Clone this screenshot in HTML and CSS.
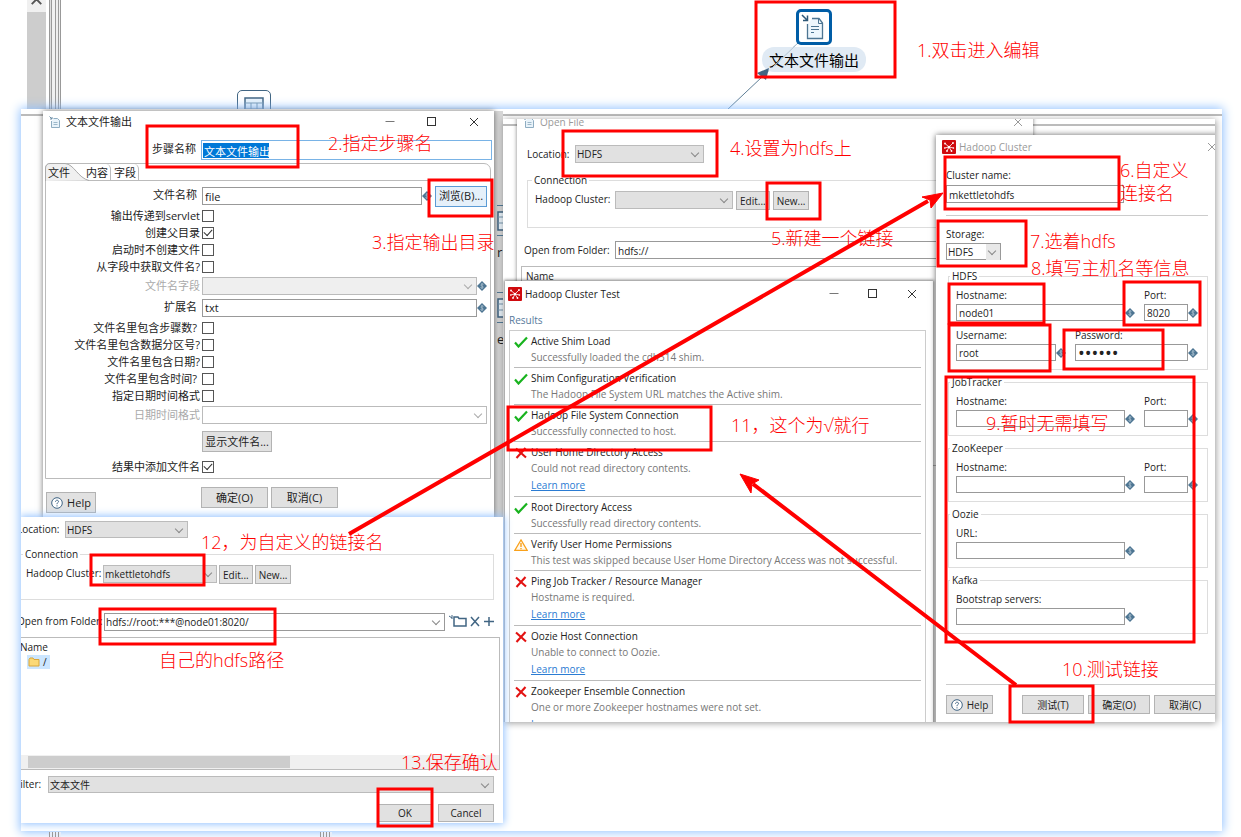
FILE: index.html
```html
<!DOCTYPE html>
<html lang="zh-CN">
<head>
<meta charset="utf-8">
<title>文本文件输出</title>
<link rel="stylesheet" href="styles.css">
</head>
<body>
<svg class="defs" aria-hidden="true">
  <symbol id="var" viewBox="0 0 10 10"><path d="M5 0 10 5 5 10 0 5Z" fill="#4d7592"/><path d="M6.500 3.300C5 2.600 3.600 3.200 4 4.300S6.400 5 6.200 6.200 4.300 7.200 3.400 6.500M5 2v6" fill="none" stroke="#b5c8d6" stroke-width=".7"/></symbol>
  <symbol id="doc" viewBox="0 0 12 12"><path d="M4.500 2.500H8.500L10.500 4.500V11.500H2.500V5" fill="#e9f3fa" stroke="#8fadc2"/><path d="M4.500 6.500H8.500M4.500 8.500H8.500" stroke="#9db8ca"/><path d="M.5.5 3 3M3 1V3H1" fill="none" stroke="#6d8ea7"/></symbol>
  <symbol id="hadoop" viewBox="0 0 14 14"><rect width="14" height="14" rx="1" fill="#cf0a0e"/><path d="M7 7 3 3.500M7 7 11 3M7 7 2.500 8M7 7 11.500 8M7 7 5 11M7 7 9.500 11" stroke="#fff" stroke-width=".8"/><circle cx="7" cy="7" r="1.300" fill="#fff"/><g fill="#fff"><circle cx="3" cy="3.500" r=".9"/><circle cx="11" cy="3" r=".9"/><circle cx="2.800" cy="8" r=".8"/><circle cx="11.400" cy="8" r=".8"/><circle cx="5" cy="11" r=".9"/><circle cx="9.500" cy="11" r=".9"/></g></symbol>
  <symbol id="ok" viewBox="0 0 14 12"><path d="M1 6.500 4.500 10.500 13 1.500" fill="none" stroke="#18b31e" stroke-width="2.200"/></symbol>
  <symbol id="bad" viewBox="0 0 14 12"><path d="M2 1.500 12 10.500M11.500 1 2.500 11" fill="none" stroke="#e31212" stroke-width="2.100"/></symbol>
  <symbol id="warn" viewBox="0 0 14 12"><path d="M7 .9 13.200 11.400H.8Z" fill="#fff8ec" stroke="#f9a11b" stroke-width="1.200"/><path d="M7 4V8M7 9.100V10.300" stroke="#f9a11b" stroke-width="1.400"/></symbol>
  <symbol id="help" viewBox="0 0 12 12"><circle cx="6" cy="6" r="5.300" fill="#fff" stroke="#3f6484"/><path d="M4.500 4.700C4.600 2.700 7.700 2.800 7.500 4.700 7.300 5.700 6 5.700 6 7.200M6 8.300V9.400" fill="none" stroke="#3f6484"/></symbol>
  <symbol id="min" viewBox="0 0 10 10"><path d="M.5 4.500H9.500" stroke="#777"/></symbol>
  <symbol id="max" viewBox="0 0 10 10"><rect x=".5" y=".5" width="8" height="8" fill="none" stroke="#333"/></symbol>
  <symbol id="close" viewBox="0 0 10 10"><path d="M1 1 9 9M9 1 1 9" stroke="currentColor" fill="none"/></symbol>
  <symbol id="grid" viewBox="0 0 20 20"><rect x="1" y="1" width="18" height="18" fill="#e9f3fa" stroke="#416583" stroke-width="1.500"/><path d="M1 6H19M7 6V19M13 6V19M1 12H19" stroke="#7796ad"/></symbol>
</svg>

<main class="stage">
  <div class="side-scroll"><svg viewBox="0 0 20 12"><path d="M5 4 10 -1 15 4" fill="none" stroke="#555" stroke-width="2"/></svg></div>
  <div class="splitter"></div>
  <div class="tile"><svg width="20" height="20"><use href="#grid"/></svg></div>

  <svg class="hop" viewBox="0 0 80 70"><path d="M0 68 71 1" stroke="#5f7f97" fill="none"/></svg>
  <div class="step">
    <div class="step-icon"><svg width="28" height="28" viewBox="0 0 28 28"><path d="M7.500 11V25.500H22.500V10L19 5.500H12" fill="#eef7fd" stroke="#4d7592" stroke-width="1.300"/><path d="M18.500 6V10.500H22.500M11 13.500H19M11 16.500H19M11 19.500H14" stroke="#4d7592" fill="none"/><path d="M2 2 7 7M7.500 2.500V7.500H3" stroke="#2d5878" stroke-width="1.500" fill="none"/></svg></div>
    <div class="step-name">文本文件输出</div>
  </div>
  <svg class="hop" viewBox="0 0 80 70"><path d="M30 31 42 26 39 38Z" fill="#416583"/><path d="M45 26 70 2" stroke="#b3c5d3"/></svg>

  <section class="sheet">
    <div class="sheet-rule"></div>
    <div class="peek"><div><svg width="20" height="20"><use href="#grid"/></svg></div><span>r</span><div><svg width="20" height="20"><use href="#grid"/></svg></div><span>e</span></div>

    <form class="win output">
      <header class="bar"><svg width="12" height="12"><use href="#doc"/></svg><h1>文本文件输出</h1>
        <span class="ctl"><svg><use href="#min"/></svg><svg><use href="#max"/></svg><svg><use href="#close"/></svg></span></header>
      <div class="step-row"><label for="stepname">步骤名称</label><input id="stepname" class="picked" value="文本文件输出"></div>
      <div class="tabs">
        <nav class="tablist"><svg class="tab-shape" viewBox="0 0 46 18"><path d="M.5 18V5Q1 .5 5 .5H20C29 1 33 15 44 17.500" fill="#f0f0f0" stroke="#aaa"/></svg><button type="button">文件</button><button type="button">内容</button><button type="button">字段</button></nav>
        <div class="fields">
          <label for="f1" class="r22 in">文件名称</label><div class="r22"><input id="f1" value="file" class="grow"><svg class="var"><use href="#var"/></svg><button type="button" class="btn hot">浏览(B)...</button></div>
          <label for="c1">输出传递到servlet</label><div><input type="checkbox" id="c1"></div>
          <label for="c2">创建父目录</label><div><input type="checkbox" id="c2" checked></div>
          <label for="c3">启动时不创建文件</label><div><input type="checkbox" id="c3"></div>
          <label for="c4">从字段中获取文件名?</label><div><input type="checkbox" id="c4"></div>
          <label for="f2" class="r21 off">文件名字段</label><div class="r21"><span class="sel grow dim"><select id="f2" disabled><option></option></select></span><svg class="var"><use href="#var"/></svg></div>
          <label for="f3" class="r23 in">扩展名</label><div class="r23"><input id="f3" value="txt" class="grow"><svg class="var"><use href="#var"/></svg></div>
          <label for="c5" class="in">文件名里包含步骤数?</label><div><input type="checkbox" id="c5"></div>
          <label for="c6">文件名里包含数据分区号?</label><div><input type="checkbox" id="c6"></div>
          <label for="c7">文件名里包含日期?</label><div><input type="checkbox" id="c7"></div>
          <label for="c8" class="in">文件名里包含时间?</label><div><input type="checkbox" id="c8"></div>
          <label for="c9">指定日期时间格式</label><div><input type="checkbox" id="c9"></div>
          <label for="f4" class="r21 off">日期时间格式</label><div class="r21"><span class="sel grow white dim"><select id="f4" disabled><option></option></select></span></div>
          <span></span><div class="r32"><button type="button" class="btn">显示文件名...</button></div>
          <label for="c10">结果中添加文件名</label><div><input type="checkbox" id="c10" checked></div>
        </div>
      </div>
      <footer class="foot"><button type="button" class="btn help"><svg width="12" height="12"><use href="#help"/></svg>Help</button><button type="button" class="btn wide">确定(O)</button><button type="button" class="btn wide">取消(C)</button></footer>
    </form>

    <section class="group">
      <div class="sheet-rule"></div>
      <form class="win openfile">
        <header class="bar faded"><svg width="12" height="12"><use href="#doc"/></svg><h2>Open File</h2><span class="ctl"><svg><use href="#close"/></svg></span></header>
        <div class="line"><label for="loc">Location:</label><span class="sel w128"><select id="loc"><option>HDFS</option></select></span></div>
        <fieldset><legend>Connection</legend><div class="line"><label for="clu">Hadoop Cluster:</label><span class="sel w118"><select id="clu"><option></option></select></span><button type="button" class="btn">Edit...</button><button type="button" class="btn">New...</button></div></fieldset>
        <div class="line folder"><label for="fold">Open from Folder:</label><input id="fold" value="hdfs://" class="grow"></div>
        <div class="list"><span>Name</span></div>
      </form>

      <section class="win test">
        <header class="bar"><svg width="14" height="14"><use href="#hadoop"/></svg><h2>Hadoop Cluster Test</h2><span class="ctl"><svg><use href="#min"/></svg><svg><use href="#max"/></svg><svg><use href="#close"/></svg></span></header>
        <h3>Results</h3>
        <ul class="results">
          <li><svg><use href="#ok"/></svg><b>Active Shim Load</b><p>Successfully loaded the cdh514 shim.</p></li>
          <li><svg><use href="#ok"/></svg><b>Shim Configuration Verification</b><p>The Hadoop File System URL matches the Active shim.</p></li>
          <li><svg><use href="#ok"/></svg><b>Hadoop File System Connection</b><p>Successfully connected to host.</p></li>
          <li><svg><use href="#bad"/></svg><b>User Home Directory Access</b><p>Could not read directory contents.</p><a href="#">Learn more</a></li>
          <li><svg><use href="#ok"/></svg><b>Root Directory Access</b><p>Successfully read directory contents.</p></li>
          <li><svg><use href="#warn"/></svg><b>Verify User Home Permissions</b><p>This test was skipped because User Home Directory Access was not successful.</p></li>
          <li><svg><use href="#bad"/></svg><b>Ping Job Tracker / Resource Manager</b><p>Hostname is required.</p><a href="#">Learn more</a></li>
          <li><svg><use href="#bad"/></svg><b>Oozie Host Connection</b><p>Unable to connect to Oozie.</p><a href="#">Learn more</a></li>
          <li><svg><use href="#bad"/></svg><b>Zookeeper Ensemble Connection</b><p>One or more Zookeeper hostnames were not set.</p><a href="#">Learn more</a></li>
        </ul>
      </section>

      <form class="win cluster">
        <header class="bar faded"><svg width="14" height="14"><use href="#hadoop"/></svg><h2>Hadoop Cluster</h2><span class="ctl"><svg><use href="#close"/></svg></span></header>
        <div class="stack name"><label for="cn">Cluster name:</label><input id="cn" value="mkettletohdfs"></div>
        <div class="stack storage"><label for="st">Storage:</label><span class="sel white"><select id="st"><option>HDFS</option></select></span></div>
        <fieldset class="two"><legend>HDFS</legend>
          <div class="pair"><div class="stack"><label for="h1">Hostname:</label><span><input id="h1" value="node01"><svg class="var"><use href="#var"/></svg></span></div><div class="stack"><label for="p1">Port:</label><span><input id="p1" value="8020"><svg class="var"><use href="#var"/></svg></span></div></div>
          <div class="pair cred"><div class="stack"><label for="u1">Username:</label><span><input id="u1" value="root"><svg class="var"><use href="#var"/></svg></span></div><div class="stack"><label for="w1">Password:</label><span><input id="w1" type="password" value="123456"><svg class="var"><use href="#var"/></svg></span></div></div>
        </fieldset>
        <fieldset><legend>JobTracker</legend><div class="pair"><div class="stack"><label for="h2">Hostname:</label><span><input id="h2"><svg class="var"><use href="#var"/></svg></span></div><div class="stack"><label for="p2">Port:</label><span><input id="p2"><svg class="var"><use href="#var"/></svg></span></div></div></fieldset>
        <fieldset><legend>ZooKeeper</legend><div class="pair"><div class="stack"><label for="h3">Hostname:</label><span><input id="h3"><svg class="var"><use href="#var"/></svg></span></div><div class="stack"><label for="p3">Port:</label><span><input id="p3"><svg class="var"><use href="#var"/></svg></span></div></div></fieldset>
        <fieldset><legend>Oozie</legend><div class="pair"><div class="stack"><label for="u4">URL:</label><span><input id="u4"><svg class="var"><use href="#var"/></svg></span></div></div></fieldset>
        <fieldset><legend>Kafka</legend><div class="pair"><div class="stack"><label for="b5">Bootstrap servers:</label><span><input id="b5"><svg class="var"><use href="#var"/></svg></span></div></div></fieldset>
        <footer class="foot"><button type="button" class="btn help"><svg width="12" height="12"><use href="#help"/></svg>Help</button><button type="button" class="btn wide">测试(T)</button><button type="button" class="btn wide">确定(O)</button><button type="button" class="btn wide">取消(C)</button></footer>
      </form>
    </section>

    <form class="picker">
      <div class="line l1"><label for="loc2">Location:</label><span class="sel w123"><select id="loc2"><option>HDFS</option></select></span></div>
      <fieldset><legend>Connection</legend><div class="line"><label for="clu2">Hadoop Cluster:</label><span class="sel w114"><select id="clu2"><option>mkettletohdfs</option></select></span><button type="button" class="btn">Edit...</button><button type="button" class="btn">New...</button></div></fieldset>
      <div class="line l3"><label for="fold2">Open from Folder:</label><span class="sel white grow"><select id="fold2"><option>hdfs://root:***@node01:8020/</option></select></span>
        <svg class="tools" viewBox="0 0 46 14"><g fill="none" stroke="#416583" stroke-width="1.500"><path d="M6 3H10L11 4.500H18V12H6Z"/><path d="M23 3 31 12M31 3 23 12M41 3V12M36 7.500H46"/></g><path d="M1 2 4 4M4 1V5" stroke="#416583"/></svg></div>
      <div class="tree"><span class="col">Name</span><div class="node"><span><svg width="12" height="10" viewBox="0 0 12 10"><path d="M1 9V2.500L2 1H5L6 2.500H11V9Z" fill="#fbd978" stroke="#d9a63a"/></svg>/</span></div><div class="hscroll"><div></div></div></div>
      <div class="line l5"><label for="fil">Filter:</label><span class="sel grow"><select id="fil"><option>文本文件</option></select></span></div>
      <div class="acts"><button type="button" class="btn">OK</button><button type="button" class="btn">Cancel</button></div>
    </form>
  </section>
  <div class="bottom-edge"><i></i><i></i></div>

  <svg class="marks" width="1241" height="837" viewBox="0 0 1241 837" aria-hidden="true">
    <g fill="none" stroke="#f00" stroke-width="3">
      <rect x="756" y="2" width="139" height="75"/><rect x="147" y="126" width="151" height="41"/><rect x="429" y="180" width="63" height="36"/>
      <rect x="563" y="131" width="154" height="45"/><rect x="767" y="183" width="53" height="36"/><rect x="945" y="157" width="174" height="52"/>
      <rect x="938" y="221" width="88" height="45"/><rect x="949" y="284" width="95" height="39"/><rect x="1124" y="282" width="76" height="43"/>
      <rect x="949" y="325" width="101" height="46"/><rect x="1064" y="330" width="99" height="39"/><rect x="946" y="377" width="248" height="265"/>
      <rect x="1010" y="686" width="83" height="36"/><rect x="508" y="407" width="203" height="43"/><rect x="91" y="555" width="113" height="30"/>
      <rect x="100" y="609" width="175" height="35"/><rect x="378" y="789" width="54" height="37"/>
      <path d="M349 534 928 201M1016 685 753 484" stroke-width="4"/>
    </g>
    <path d="M943 193 931 208 930 200 922 197ZM740 474 759 480 752 484 751 493Z" fill="#f00" stroke="#f00"/>
  </svg>
  <p class="note n1">1.双击进入编辑</p><p class="note n2">2.指定步骤名</p><p class="note n3">3.指定输出目录</p><p class="note n4">4.设置为hdfs上</p>
  <p class="note n5">5.新建一个链接</p><p class="note n6">6.自定义<br>连接名</p><p class="note n7">7.选着hdfs</p><p class="note n8">8.填写主机名等信息</p>
  <p class="note n9">9.暂时无需填写</p><p class="note n10">10.测试链接</p><p class="note n11">11，这个为√就行</p><p class="note n12">12，为自定义的链接名</p>
  <p class="note n13">13.保存确认</p><p class="note n14">自己的hdfs路径</p>
</main>
</body>
</html>
```
FILE: styles.css
```css
* { box-sizing: border-box; }
body { margin: 0; background: #fff; color: #222; font: 10px/16px "Open Sans", "Noto Sans CJK SC", sans-serif; }
h1, h2, h3, p, ul, fieldset { margin: 0; padding: 0; font-weight: 400; font-size: inherit; }
.defs { position: absolute; width: 0; height: 0; }
svg { flex: none; display: block; }
.stage { position: relative; height: 100vh; min-height: 837px; overflow: hidden; }

/* canvas behind the windows */
.side-scroll { position: absolute; left: 27px; top: 0; width: 19px; height: 120px; background: #cdcdcd; }
.side-scroll svg { width: 19px; height: 12px; background: #f0f0f0; }
.splitter { position: absolute; left: 49px; top: 0; width: 12px; height: 120px; border: 1px solid #999; border-width: 0 1px; background: linear-gradient(90deg, #ddd 1px, #999 1px 2px, #f0f0f0 2px 5px, #999 5px 6px, #eee 6px 8px, #999 8px 9px, #eee 9px); }
.tile { position: absolute; left: 237px; top: 90px; width: 34px; height: 34px; padding: 6px; border: 1px solid #416583; border-radius: 5px; }
.hop { position: absolute; left: 727px; top: 42px; width: 80px; height: 70px; }
.step { position: absolute; left: 762px; top: 9px; display: flex; flex-direction: column; align-items: center; gap: 2px; }
.step-icon { padding: 1px; width: 36px; height: 36px; border: 3px solid #005da6; border-radius: 5px; background: #fff; }
.step-name { padding: 1px 7px 0; border-radius: 12px; background: #e0eaf4; color: #000; font-size: 15px; line-height: 24px; }

/* pasted sheet */
.sheet { position: absolute; left: 21px; top: 109px; width: 1201px; height: 722px; background: #fff; box-shadow: 0 0 10px 1px #8fc0ff; }
.sheet-rule { height: 7px; border-top: 3px solid #fff; border-bottom: 2px solid #bbb; }
.peek { position: absolute; left: 473px; top: 2px; width: 9px; height: 406px; padding: 94px 0 0 3px; display: flex; flex-direction: column; overflow: hidden; font-size: 13px; background: #d8d8d8; }
.peek div { height: 31px; padding: 5px 0; border: 1px solid #557c99; border-width: 1px 0; }
.peek span { height: 56px; line-height: 32px; }
.win { position: absolute; background: #fff; box-shadow: 0 0 6px rgba(0, 0, 0, .55); }
.bar { display: flex; align-items: center; gap: 6px; height: 20px; padding-left: 6px; }
.ctl { margin-left: auto; display: flex; gap: 31px; color: #333; }
.ctl svg { width: 10px; height: 10px; }
.faded { color: #999; }
.faded .ctl { color: #999; }

input, select, button { font: inherit; color: inherit; margin: 0; }
input { height: 18px; min-width: 0; padding: 1px 2px 0; border: 1px solid #999; border-radius: 0; background: #fff; }
input[type=password] { font-size: 18px; line-height: 14px; }
input[type=checkbox] { appearance: none; width: 12px; height: 12px; padding: 0; border-color: #555; display: grid; place-items: center; }
input[type=checkbox]:checked::after { content: ""; width: 7px; height: 4px; border: solid #333; border-width: 0 0 1px 1px; transform: rotate(-48deg); margin-top: -2px; }
.grow { flex: 1; }
.sel { position: relative; display: flex; height: 18px; border: 1px solid #bbb; background: #e1e1e1; }
.sel select { flex: 1; min-width: 0; appearance: none; border: 0; background: none; padding: 0 14px 0 1px; color: #222; opacity: 1; }
.sel::after { content: ""; position: absolute; right: 5px; top: 4px; width: 5px; height: 5px; border: solid #888; border-width: 0 1px 1px 0; transform: rotate(45deg); pointer-events: none; }
.sel.dim { background: #efefef; }
.sel.dim::after { border-color: #aaa; }
.sel.white { background: #fff; border-color: #999; }
.sel.white.dim { border-color: #bbb; }
.btn { height: 19px; padding: 0 3px; border: 1px solid #b3b3b3; background: #e1e1e1; display: flex; align-items: center; justify-content: center; gap: 4px; white-space: nowrap; flex: none; }
.btn.help { font-size: 11px; padding: 0 4px; }
.var { width: 10px; height: 10px; }
.line { display: flex; gap: 3px; }
.line label { white-space: nowrap; }
.w128 { width: 129px; } .w118 { width: 118px; } .w123 { width: 123px; } .w114 { width: 114px; }
fieldset { border: 1px solid #ddd; min-width: 0; }
legend { margin-left: 4px; padding: 0 2px; line-height: 14px; }

/* text file output */
.output { left: 22px; top: 2px; width: 451px; height: 420px; font-size: 11px; }
.output .bar { gap: 5px; height: 21px; }
.output .ctl { gap: 32px; padding-right: 15px; }
.step-row { display: flex; gap: 5px; margin: 8px 2px 0 0; align-items: center; }
.step-row label { width: 153px; text-align: right; line-height: 16px; margin-top: -2px; }
.step-row input { flex: 1; height: 20px; padding-left: 2px; border-color: #79b3e6; }
.picked { color: #fff; background: linear-gradient(#0078d7, #0078d7) 1px 2px / 66px 15px no-repeat; }
.tabs { margin: 3px 3px 0 2px; border: 1px solid #bbb; border-radius: 5px 7px 0 0; }
.tablist { position: relative; display: flex; height: 17px; border-bottom: 1px solid #bbb; }
.tab-shape { position: absolute; left: -1px; top: -1px; width: 46px; height: 18px; }
.tablist button { position: relative; border: 0; background: none; padding: 0 3px; line-height: 17px; }
.tablist button:nth-of-type(1) { padding: 0 2px; margin-right: 12px; }
.tablist button:nth-of-type(n+2) { border-right: 1px solid #bbb; border-top-right-radius: 5px; padding: 0 2px; }
.tablist button:nth-of-type(3) { padding-left: 3px; }
.fields { display: grid; grid-template-columns: 154px 1fr; column-gap: 2px; padding: 4px 3px 3px 0; }
.fields label { text-align: right; height: 17px; line-height: 18px; }
.fields label.in { padding-right: 3px; }
.fields > div { display: flex; align-items: center; height: 17px; }
.fields .off { color: #aaa; }
.fields .r21 { height: 21px; line-height: 21px; } .fields .r22 { height: 22px; line-height: 20px; } .fields .r23 { height: 23px; line-height: 22px; } .fields .r32 { height: 33px; }
.fields .r22 .btn { width: 52px; margin-left: 3px; height: 21px; }
.fields .r32 .btn { height: 21px; width: 70px; }
.hot { border-color: #5b9bd5; background: #e5f0fa; }
.output .foot { display: flex; gap: 3px; padding: 8px 3px; align-items: flex-start; }
.output .foot .btn { height: 21px; width: 67px; }
.output .foot .help { width: 50px; margin: 5px 102px 0 0; }

/* right group of windows */
.group { position: absolute; left: 482px; top: 10px; width: 712px; height: 603px; background: #fff; overflow: hidden; box-shadow: 1px 1px 7px rgba(0, 0, 0, .4); }
.openfile { left: 14px; top: -8px; width: 516px; height: 620px; box-shadow: 0 0 4px rgba(0, 0, 0, .5); }
.openfile .bar { height: 22px; padding-right: 10px; gap: 5px; }
.openfile > .line { margin: 12px 0 0 10px; align-items: center; }
.openfile fieldset { margin: 10px 10px 0; height: 55px; }
.openfile fieldset .line { padding: 4px 0 0 7px; gap: 3px; }
.openfile fieldset label { width: 77px; }
.openfile .line.folder { margin: 13px 10px 0 7px; gap: 2px; }
.openfile .folder label { width: 89px; }
.openfile > .line:not(.folder) label { width: 45px; }
.list { margin: 7px 8px 0 4px; border: 1px solid #bbb; padding: 1px 4px; height: 200px; }

.test { left: 2px; top: 162px; width: 428px; height: 460px; box-shadow: 0 0 3px 1px rgba(0, 0, 0, .5); }
.test .bar { height: 26px; padding-left: 3px; gap: 3px; }
.test .ctl { gap: 29px; padding-right: 16px; }
.test h3 { margin: 5px 0 0 4px; height: 17px; color: #56799b; }
.results { margin: 1px 7px 0 4px; border: 1px solid #ccc; padding: 0 4px; list-style: none; }
.results li { display: grid; grid-template-columns: 14px 1fr; column-gap: 3px; padding: 2px 0; border-bottom: 1px solid #bbb; }
.results li > svg { width: 14px; height: 12px; margin-top: 3px; }
.results b { font-weight: 400; }
.results p, .results a { grid-column: 2; justify-self: start; white-space: nowrap; }
.results p { color: #777; }
.results a { color: #2b7cd3; line-height: 18px; }

.cluster { left: 433px; top: 16px; width: 290px; height: 610px; padding-left: 10px; box-shadow: 0 0 6px rgba(0, 0, 0, .6); }
.cluster .bar { margin-left: -4px; height: 24px; padding: 0 9px 0 0; gap: 3px; }
.stack { display: flex; flex-direction: column; }
.stack > span { display: flex; align-items: center; }
.name { margin: 8px 18px 0 0; padding-bottom: 12px; border-bottom: 1px solid #ccc; }
.name label { margin-bottom: 2px; }
.name input { width: 178px; }
.storage { margin-top: 10px; }
.storage .sel { width: 55px; height: 17px; margin-top: 1px; }
.storage .sel select { background: linear-gradient(#e8e8e8, #e8e8e8) right / 14px 100% no-repeat; }
.cluster fieldset { margin: 9px 18px 0 2px; height: 61px; padding-left: 7px; }
.cluster fieldset + fieldset { margin-top: 5px; }
.cluster fieldset.two { height: 101px; }
.cluster legend { margin-left: -6px; }
.pair { display: flex; gap: 9px; padding-top: 4px; }
.pair .stack:first-child { width: 179px; }
.pair input { width: 100%; height: 17px; }
.pair .stack:nth-child(2) { width: 54px; }
.pair .stack label { line-height: 17px; }
.pair.cred .stack:first-child { width: 110px; }
.pair.cred .stack:nth-child(2) { width: 123px; }
.pair.cred { padding-top: 6px; }
.cluster .foot { display: flex; gap: 4px; margin-top: 50px; padding-top: 10px; border-top: 1px solid #ccc; }
.cluster .foot .wide { width: 62px; }
.cluster .foot .help { width: 47px; margin-right: 25px; font-size: 10px; }

/* folder picker */
.picker { position: absolute; left: 0; top: 408px; width: 482px; height: 306px; background: #fff; padding-right: 9px; clip-path: inset(-12px -12px -12px 0); box-shadow: 0 0 8px 1px #8fc0ff; }
.picker .l1 { padding-top: 4px; }
.picker .l1 label { width: 45px; margin-left: -4px; }
.picker .l1 .sel, .picker .l5 .sel { height: 17px; }
.picker fieldset { margin-top: 9px; height: 53px; border-left: 0; }
.picker legend { margin-left: 2px; }
.picker fieldset .line { padding: 4px 0 0 5px; gap: 2px; }
.picker fieldset label { width: 75px; }
.picker .l3 { margin-top: 13px; }
.picker .l3 label { width: 86px; margin-left: -4px; }
.picker .l3 { gap: 1px; }
.picker .l3 .tools { width: 46px; height: 16px; margin-left: 2px; }
.tree { margin: 6px -6px 0 -4px; border: 1px solid #bbb; height: 133px; display: flex; flex-direction: column; padding-top: 1px; }
.tree .col { padding-left: 2px; }
.node { display: flex; padding-left: 9px; }
.node span { display: flex; align-items: center; gap: 3px; padding: 0 3px 0 1px; background: #cce6ff; line-height: 14px; }
.hscroll { margin-top: auto; height: 14px; background: #f0f0f0; padding: 1px 0 1px 10px; }
.hscroll div { width: 262px; height: 12px; background: #cdcdcd; }
.picker .l5 { margin-top: 6px; gap: 5px; }
.picker .l5 label { width: 28px; margin-left: -6px; }
.acts { display: flex; justify-content: flex-end; gap: 5px; margin-top: 11px; }
.acts .btn { width: 56px; height: 18px; }

.bottom-edge { position: absolute; left: 49px; right: 0; bottom: 0; height: 5px; display: flex; gap: 259px; }
.bottom-edge i { width: 12px; background: repeating-linear-gradient(90deg, #999 0 1px, #e6eefa 1px 3px); }

/* annotations */
.marks { position: absolute; left: 0; top: 0; pointer-events: none; }
.note { position: absolute; color: #f00; font-size: 18px; line-height: 23px; font-weight: 300; white-space: nowrap; }
.n1 { left: 917px; top: 39px; } .n2 { left: 328px; top: 132px; } .n3 { left: 372px; top: 231px; } .n4 { left: 730px; top: 137px; }
.n5 { left: 771px; top: 227px; } .n6 { left: 1120px; top: 159px; } .n7 { left: 1030px; top: 230px; } .n8 { left: 1031px; top: 257px; }
.n9 { left: 986px; top: 412px; } .n10 { left: 1062px; top: 658px; } .n11 { left: 731px; top: 414px; } .n12 { left: 201px; top: 531px; }
.n13 { left: 401px; top: 751px; } .n14 { left: 159px; top: 649px; }
```
